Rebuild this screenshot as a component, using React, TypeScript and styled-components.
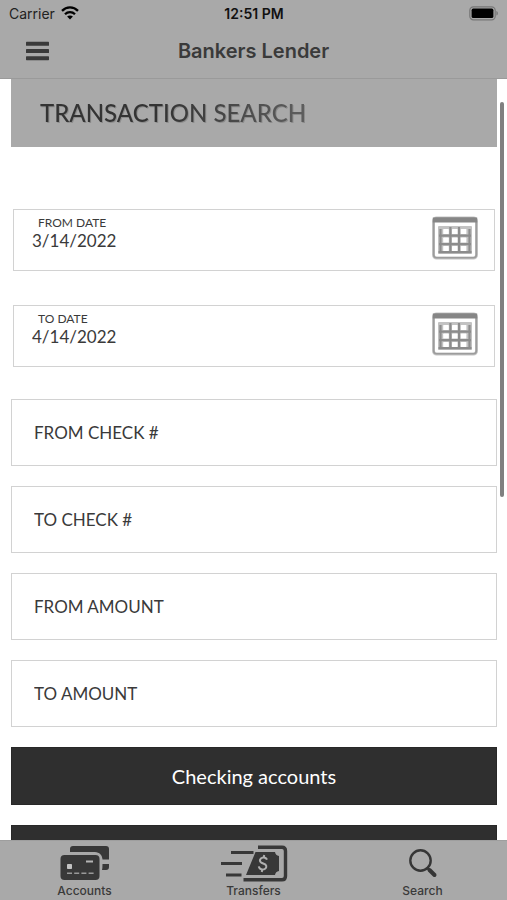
import React from "react";
import styled, { createGlobalStyle } from "styled-components";

const GlobalStyle = createGlobalStyle`
  * { box-sizing: border-box; }
  body { margin: 0; background: #fff; }
  button, input { font: inherit; color: inherit; margin: 0; }
`;

const grey = "#a9a9a9";
const ink = "#3a3a3a";
const ui = `"Inter", "Liberation Sans", sans-serif`;
const body = `"Lato", "Liberation Sans", sans-serif`;

const Screen = styled.div`
  display: flex;
  flex-direction: column;
  height: 100vh;
  overflow: hidden;
  color: ${ink};
  font-family: ${body};
`;

const Header = styled.header`
  flex: none;
  background: ${grey};
  border-bottom: 1px solid #9a9a9a;
  font-family: ${ui};
`;

const ThreeColumns = styled.div`
  display: grid;
  grid-template-columns: 1fr auto 1fr;
  align-items: center;
`;

const StatusBar = styled(ThreeColumns)`
  height: 26px;
  padding: 0 8px 0 9px;
  font-size: 14px;
  color: #222;
`;

const Carrier = styled.div`
  display: flex;
  align-items: center;
  gap: 6px;
`;

const Clock = styled.time`
  font-weight: 600;
  font-size: 14px;
  color: #111;
`;

const Battery = styled.svg`
  justify-self: end;
`;

const NavBar = styled(ThreeColumns)`
  height: 52px;
  padding: 0 26px 2px;
`;

const MenuButton = styled.button`
  display: flex;
  justify-self: start;
  padding: 0;
  border: 0;
  background: none;
`;

const AppName = styled.div`
  font-weight: 600;
  font-size: 20px;
  line-height: 24px;
`;

const Content = styled.main`
  position: relative;
  flex: 1;
  min-height: 0;
  overflow: hidden;
  padding: 0 10px 0 11px;
`;

const Banner = styled.div`
  display: flex;
  margin-bottom: 62px;
  padding: 0 29px;
  background: ${grey};
`;

const Title = styled.h1`
  margin: 0;
  background: linear-gradient(90deg, #333 45%, #5e5e5e);
  background-clip: text;
  color: transparent;
  filter: drop-shadow(1px 1px 0 #8c8c8c);
  font-weight: 500;
  font-size: 24px;
  line-height: 68px;
`;

const DateList = styled.div`
  display: grid;
  gap: 34px;
  padding: 0 2px;
  margin-bottom: 32px;
`;

const DateBox = styled.div`
  display: flex;
  justify-content: space-between;
  align-items: flex-start;
  height: 62px;
  padding: 6px 16px 0 18px;
  border: 1px solid #d2d2d2;
`;

const DateText = styled.div`
  display: flex;
  flex: 1;
  flex-direction: column;
  min-width: 0;
`;

const DateLabel = styled.label`
  padding-left: 6px;
  font-size: 12px;
  line-height: 14px;
`;

const DateInput = styled.input`
  width: 100%;
  height: 20px;
  padding: 0;
  border: 0;
  background: none;
  font-size: 17px;
`;

const IconButton = styled.button`
  display: flex;
  padding: 0;
  border: 0;
  background: none;
`;

const FieldList = styled.div`
  display: grid;
  gap: 20px;
`;

const Field = styled.input`
  width: 100%;
  height: 67px;
  padding: 0 22px;
  border: 1px solid #d2d2d2;
  border-radius: 0;
  background: #fff;
  font-size: 17px;

  &::placeholder {
    color: ${ink};
    opacity: 1;
  }
`;

const AccountButton = styled.button`
  height: 58px;
  border: 1px solid #282828;
  background: #2f2f2f;
  color: #fff;
  font-size: 20px;
`;

const ScrollThumb = styled.div`
  position: absolute;
  top: 23px;
  right: 3px;
  width: 4px;
  height: 395px;
  border-radius: 2px;
  background: #808080;
`;

const TabBar = styled.nav`
  display: grid;
  flex: none;
  grid-template-columns: repeat(3, 1fr);
  height: 60px;
  border-top: 1px solid #9e9e9e;
  background: ${grey};
`;

const Tab = styled.a`
  display: flex;
  flex-direction: column;
  align-items: center;
  gap: 1px;
  padding-top: 3px;
  color: ${ink};
  font: 500 12px/16px ${ui};
  text-decoration: none;
`;

const WifiIcon = () => (
  <svg width="18" height="14" viewBox="0 0 18 14" fill="none" stroke="#000" strokeWidth="2.3" aria-hidden="true">
    <path d="M1 4.9C5.5 0.3 12.5 0.3 17 4.9" />
    <path d="M4 8.2C6.8 5.4 11.2 5.4 14 8.2" />
    <path d="M9 13.5L6.1 10.5C7.7 9 10.3 9 11.9 10.5Z" fill="#000" stroke="none" />
  </svg>
);

const BatteryIcon = () => (
  <Battery width="30" height="15" viewBox="0 0 30 15" aria-label="Battery full" role="img">
    <rect x="0.8" y="0.8" width="25.4" height="13" rx="3.6" fill="none" stroke="#777" strokeWidth="1.2" />
    <rect x="2.6" y="2.6" width="21.8" height="9.4" rx="1.6" fill="#000" />
    <path d="M27.4 5C29.4 5.6 29.4 9 27.4 9.6Z" fill="#777" />
  </Battery>
);

const MenuIcon = () => (
  <svg width="23" height="20" viewBox="0 0 23 20" fill="#3a3a3a" aria-hidden="true">
    <rect y="0.8" width="23" height="4" rx="0.6" />
    <rect y="8" width="23" height="4" rx="0.6" />
    <rect y="15.2" width="23" height="4" rx="0.6" />
  </svg>
);

const CalendarIcon = () => (
  <svg width="46" height="44" viewBox="0 0 46 44" aria-hidden="true">
    <rect x="1.5" y="2" width="43" height="40" rx="3" fill="#fff" stroke="#c4c4c4" strokeWidth="3" />
    <rect x="1.7" y="2" width="42.6" height="39.8" rx="3" fill="none" stroke="#9c9c9c" strokeWidth="1.6" />
    <path d="M0.8 1.5H45.2V6.5H0.8Z" fill="#868686" />
    <rect x="6" y="10" width="34" height="28" rx="1" fill="#c2c2c2" />
    <path d="M7 19.7H39M7 28.2H39M6.5 36.2H39.5M18.4 11V37M27 11V37M37.5 13V37M8.5 13V37" stroke="#8c8c8c" strokeWidth="2.2" />
    {[13, 21.6, 30].map((y) =>
      [11.2, 20, 28.8].map((x) => <rect key={`${x}-${y}`} x={x} y={y} width="5.6" height="5" rx="0.6" fill="#fff" />)
    )}
  </svg>
);

const CardsIcon = () => (
  <svg width="50" height="38" viewBox="0 0 50 38" aria-hidden="true">
    <path d="M10 8V5Q10 2 13 2H46Q49 2 49 5V15.5H42.5C42.3 11 39.5 8.3 35 8Z" fill="#383838" />
    <path d="M42.5 20H49V23Q49 26 46 26H42Q42.5 24 42.5 20Z" fill="#383838" />
    <rect x="0.5" y="11" width="39" height="25" rx="4" fill="#383838" />
    <rect x="7" y="20" width="5" height="5" rx="0.8" fill="#c2c2c2" />
    <rect x="26" y="16.5" width="7" height="2" fill="#b5b5b5" />
    <path d="M7 29.2H34" stroke="#999" strokeWidth="1.6" strokeDasharray="5 2.2" />
  </svg>
);

const TransferIcon = () => (
  <svg width="68" height="38" viewBox="0 0 68 38" fill="none" aria-hidden="true">
    <path d="M11 8.5H33.5M1 19.5H22M6 31H21.5" stroke="#383838" strokeWidth="3" />
    <path d="M38 3.2H62Q65.5 3.2 65.5 7V32Q65.5 35.8 62 35.8H23.5" stroke="#383838" strokeWidth="3.4" />
    <path d="M35.5 8H55Q55.5 11.5 59 12V27Q55.5 27.5 55 31H26Z" fill="#383838" />
    <path d="M47 15.7C46.3 13.8 44.8 13.3 43 13.5C40 13.9 38.8 17 41.3 18.7C43 19.8 45.8 19.7 46.3 22C46.7 24.4 44.2 25.8 42 25.5C40.1 25.2 39.1 24 38.8 22.4M44.2 11L43.8 13.6M42.2 25.4L41.8 28" stroke="#b0b0b0" strokeWidth="2" />
  </svg>
);

const SearchIcon = () => (
  <svg width="30" height="38" viewBox="0 0 30 38" fill="none" stroke="#363636" aria-hidden="true">
    <circle cx="12.5" cy="16.5" r="10.2" strokeWidth="2.4" />
    <path d="M19.5 24L21.3 25.8" strokeWidth="2.6" />
    <path d="M21.5 26L26.5 31" strokeWidth="4" strokeLinecap="round" />
  </svg>
);

const dates = [
  { id: "from-date", label: "FROM DATE", value: "3/14/2022" },
  { id: "to-date", label: "TO DATE", value: "4/14/2022" },
];

const fields = ["FROM CHECK #", "TO CHECK #", "FROM AMOUNT", "TO AMOUNT"];

const tabs = [
  { label: "Accounts", icon: <CardsIcon /> },
  { label: "Transfers", icon: <TransferIcon /> },
  { label: "Search", icon: <SearchIcon /> },
];

export default function App() {
  return (
    <Screen>
      <GlobalStyle />
      <Header>
        <StatusBar>
          <Carrier>Carrier <WifiIcon /></Carrier>
          <Clock>12:51 PM</Clock>
          <BatteryIcon />
        </StatusBar>
        <NavBar>
          <MenuButton aria-label="Menu"><MenuIcon /></MenuButton>
          <AppName>Bankers Lender</AppName>
        </NavBar>
      </Header>
      <Content>
        <Banner>
          <Title>TRANSACTION SEARCH</Title>
        </Banner>
        <DateList>
          {dates.map((d) => (
            <DateBox key={d.id}>
              <DateText>
                <DateLabel htmlFor={d.id}>{d.label}</DateLabel>
                <DateInput id={d.id} defaultValue={d.value} />
              </DateText>
              <IconButton aria-label={`Choose ${d.label.toLowerCase()}`}><CalendarIcon /></IconButton>
            </DateBox>
          ))}
        </DateList>
        <FieldList>
          {fields.map((f) => <Field key={f} aria-label={f} placeholder={f} />)}
          <AccountButton>Checking accounts</AccountButton>
          <AccountButton aria-label="More accounts" />
        </FieldList>
        <ScrollThumb />
      </Content>
      <TabBar>
        {tabs.map((t) => (
          <Tab key={t.label} href={`#${t.label.toLowerCase()}`}>{t.icon}{t.label}</Tab>
        ))}
      </TabBar>
    </Screen>
  );
}
